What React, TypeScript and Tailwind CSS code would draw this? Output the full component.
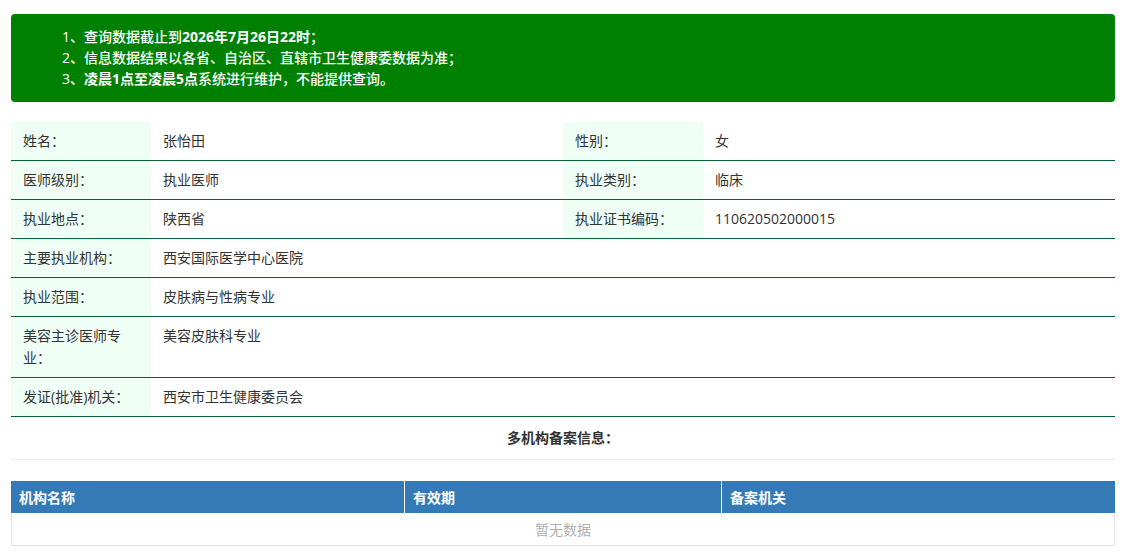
import React from "react";

const font = { fontFamily: '"Open Sans", "Noto Sans CJK SC", sans-serif' };

function Label({ children }: { children: React.ReactNode }) {
  return (
    <div className="w-[140px] shrink-0 bg-[#effff6] px-3 py-2 leading-[22px] text-[#333]">
      {children}
    </div>
  );
}

function Value({ children, wide }: { children: React.ReactNode; wide?: boolean }) {
  return (
    <div
      className={
        (wide ? "flex-1" : "w-[412px] shrink-0") +
        " px-3 py-2 leading-[22px] text-[#333]"
      }
    >
      {children}
    </div>
  );
}

export default function App() {
  return (
    <div className="min-h-screen bg-white text-[14px]" style={font}>
      <div className="ml-[11px] w-[1104px] pt-[14px]">
        <div className="rounded-[4px] bg-[#008000] pt-3 pb-[13px] pl-[51px] text-[14px] font-medium leading-[21px] text-white">
          <div>
            1、查询数据截止到<span className="font-bold">2026年7月26日22时</span>；
          </div>
          <div>2、信息数据结果以各省、自治区、直辖市卫生健康委数据为准；</div>
          <div>
            3、<span className="font-bold">凌晨1点至凌晨5点</span>系统进行维护，不能提供查询。
          </div>
        </div>

        <div className="mt-5">
          <div className="flex border-b border-[#0b6332]">
            <Label>姓名：</Label>
            <Value>张怡田</Value>
            <Label>性别：</Label>
            <Value wide>女</Value>
          </div>
          <div className="flex border-b border-[#0b6332]">
            <Label>医师级别：</Label>
            <Value>执业医师</Value>
            <Label>执业类别：</Label>
            <Value wide>临床</Value>
          </div>
          <div className="flex border-b border-[#0b6332]">
            <Label>执业地点：</Label>
            <Value>陕西省</Value>
            <Label>执业证书编码：</Label>
            <Value wide>110620502000015</Value>
          </div>
          <div className="flex border-b border-[#0b6332]">
            <Label>主要执业机构：</Label>
            <Value wide>西安国际医学中心医院</Value>
          </div>
          <div className="flex border-b border-[#0b6332]">
            <Label>执业范围：</Label>
            <Value wide>皮肤病与性病专业</Value>
          </div>
          <div className="flex border-b border-[#0b6332]">
            <Label>美容主诊医师专业：</Label>
            <Value wide>美容皮肤科专业</Value>
          </div>
          <div className="flex border-b border-[#0b6332]">
            <Label>发证(批准)机关：</Label>
            <Value wide>西安市卫生健康委员会</Value>
          </div>
        </div>

        <div className="border-b border-[#eeeeee] py-[10px] text-center font-bold leading-[22px] text-[#333]">
          多机构备案信息：
        </div>

        <div className="mt-[21px]">
          <div className="flex h-[32px] bg-[#337ab7] font-bold text-white">
            <div className="flex w-[394px] items-center border-r border-white px-2">机构名称</div>
            <div className="flex w-[317px] items-center border-r border-white px-2">有效期</div>
            <div className="flex flex-1 items-center px-2">备案机关</div>
          </div>
          <div className="flex h-[33px] items-center justify-center border border-t-0 border-[#e5e5e5] text-[#b0b0b0]">
            暂无数据
          </div>
        </div>
      </div>
    </div>
  );
}
